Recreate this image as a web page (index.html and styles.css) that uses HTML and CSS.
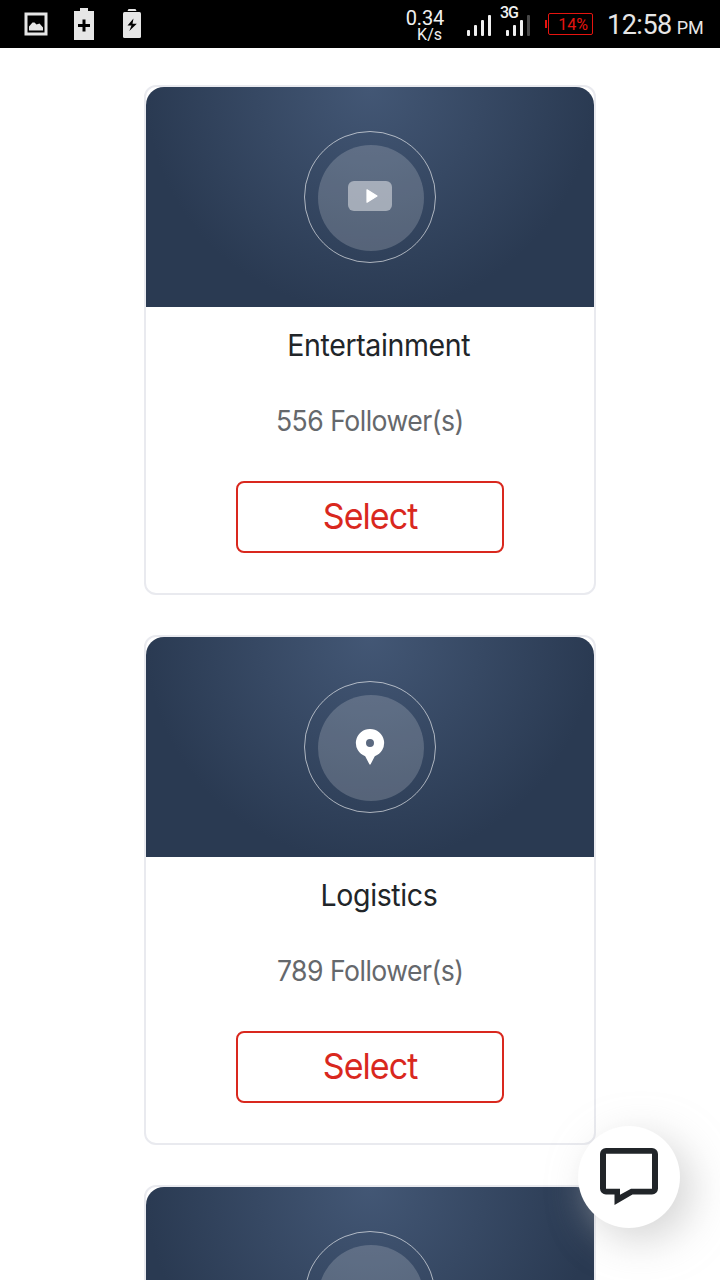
FILE: index.html
```
<!DOCTYPE html>
<html lang="en">
<head>
    <meta charset="UTF-8">
    <meta name="viewport" content="width=device-width, initial-scale=1.0">
    <title>Select Categories</title>
    <link rel="stylesheet" href="styles.css">
</head>
<body>
    <header class="status-bar">
        <svg class="status-icons" width="160" height="48" viewBox="0 0 160 48">
            <g fill="#e6e6e6">
                <path fill-rule="evenodd" d="M24.500 12.500h23v23h-23zM27.500 15.500v17h17v-17z"/>
                <path d="M29 30.500v-4l3.500-4h2l2 2 3-1 3.500 4v3z"/>
                <path d="M80 8h8v3h6v29H74V11h6z"/>
                <path d="M128.500 9h7l1 2h-9z"/>
                <rect x="123" y="12" width="18" height="26" rx="1.500"/>
            </g>
            <path d="M82.500 19.500h3V24H90v3h-4.500v4.500h-3V27H78v-3h4.500z"/>
            <path d="M133.500 18.500l-6 7h4l-2.200 5.500 7.500-7.200h-4.300z"/>
        </svg>
        <div class="net-speed">
            <span class="speed-value">0.34</span>
            <span class="speed-unit">K/s</span>
        </div>
        <svg class="signal" width="26" height="48" viewBox="0 0 26 48" fill="#f0f0f0">
            <rect x="0" y="30" width="3" height="6" rx="1"/>
            <rect x="7" y="25" width="3" height="11" rx="1"/>
            <rect x="14" y="20" width="3" height="16" rx="1"/>
            <rect x="21" y="15" width="3" height="21" rx="1"/>
        </svg>
        <div class="mobile-signal">
            <span class="net-type">3G</span>
            <svg width="26" height="48" viewBox="0 0 26 48" fill="#f0f0f0">
                <rect x="0" y="30" width="3" height="6" rx="1"/>
                <rect x="7" y="25" width="3" height="11" rx="1"/>
                <rect x="14" y="20" width="3" height="16" rx="1"/>
                <rect x="21" y="15" width="3" height="21" rx="1" fill="#484848"/>
            </svg>
        </div>
        <div class="battery"><span>14%</span></div>
        <div class="clock">12:58<span class="meridiem">PM</span></div>
    </header>

    <main class="card-list">
        <div class="card">
            <div class="card-banner">
                <div class="ring">
                    <div class="disc">
                        <svg width="44" height="40" viewBox="0 0 44 40">
                            <rect x="0" y="3" width="44" height="30" rx="6" fill="#fff" fill-opacity=".45"/>
                            <path d="M19 11.800v12.400l10-6.200z" fill="#fff" stroke="#fff" stroke-width="1.200" stroke-linejoin="round"/>
                        </svg>
                    </div>
                </div>
            </div>
            <h2 class="card-title">Entertainment</h2>
            <p class="followers">556 Follower(s)</p>
            <button class="select-btn"><span>Select</span></button>
        </div>

        <div class="card">
            <div class="card-banner">
                <div class="ring">
                    <div class="disc">
                        <svg width="44" height="40" viewBox="0 0 44 40">
                            <path fill="#fff" fill-rule="evenodd" d="M22 1a14 14 0 0 1 4.800 27.200L22.500 36.500h-1L17.200 28.200A14 14 0 0 1 22 1zM22 11a4 4 0 1 0 0 8 4 4 0 0 0 0-8z"/>
                        </svg>
                    </div>
                </div>
            </div>
            <h2 class="card-title">Logistics</h2>
            <p class="followers">789 Follower(s)</p>
            <button class="select-btn"><span>Select</span></button>
        </div>

        <div class="card">
            <div class="card-banner">
                <div class="ring">
                    <div class="disc"></div>
                </div>
            </div>
        </div>
    </main>

    <button class="chat-btn" aria-label="Open chat">
        <svg width="60" height="60" viewBox="0 0 60 60">
            <path fill="#212529" fill-rule="evenodd" d="M7 2h46a6 6 0 0 1 6 6v34.500a6 6 0 0 1-6 6H33.500L15.500 59V48.500H7a6 6 0 0 1-6-6V8a6 6 0 0 1 6-6zM7 7.800v35H21v6L32 42.800h21v-35z"/>
        </svg>
    </button>
</body>
</html>
```
FILE: styles.css
```
* {
    box-sizing: border-box;
}
body {
    margin: 0;
    height: 1280px;
    overflow: hidden;
    background-color: #fff;
    color: #212529;
    font-family: Inter, sans-serif;
}

/* status bar */
.status-bar {
    display: flex;
    height: 48px;
    background-color: #000;
    color: #f0f0f0;
    font-family: Roboto, sans-serif;
}
.net-speed {
    display: flex;
    flex-direction: column;
    align-items: flex-end;
    width: 64px;
    margin-left: 220px;
    padding-top: 9px;
    white-space: nowrap;
}
.speed-value {
    font-size: 20px;
    line-height: 18px;
    letter-spacing: -0.2px;
}
.speed-unit {
    margin-right: 2px;
    font-size: 16px;
    line-height: 16px;
}
.signal {
    margin-left: 23px;
}
.mobile-signal {
    position: relative;
    width: 26px;
    margin-left: 13px;
}
.net-type {
    position: absolute;
    top: 6px;
    left: -6px;
    font-size: 16px;
    font-weight: 500;
    line-height: 14px;
    letter-spacing: -1.2px;
}
.battery {
    display: flex;
    align-items: center;
    margin: 12px 0 0 13px;
    height: 24px;
    color: #e6140f;
    font-size: 16px;
}
.battery::before {
    content: "";
    width: 2px;
    height: 8px;
    margin-right: 1px;
    background-color: #e6140f;
}
.battery span {
    width: 45px;
    height: 22px;
    padding-right: 4px;
    border: 1px solid #e6140f;
    border-radius: 2px;
    line-height: 22px;
    text-align: right;
}
.clock {
    margin-left: 14px;
    color: #e6e6e6;
    font-size: 27px;
    line-height: 50px;
    letter-spacing: -0.5px;
    white-space: nowrap;
}
.meridiem {
    margin-left: 5px;
    font-size: 18px;
    letter-spacing: -0.2px;
}

/* cards */
.card-list {
    display: flex;
    flex-direction: column;
    align-items: center;
    gap: 40px;
    height: 1232px;
    padding: 37px 0 0 20px;
    overflow: hidden;
}
.card {
    display: flex;
    flex-direction: column;
    align-items: center;
    flex-shrink: 0;
    width: 452px;
    height: 510px;
    border: 2px solid #e9eaef;
    border-radius: 12px;
}
.card-banner {
    display: flex;
    justify-content: center;
    width: 448px;
    height: 220px;
    padding-top: 44px;
    border-radius: 18px 18px 0 0;
    background: radial-gradient(circle 225px at 50% 0, #435775 0%, #2a3a52 100%);
}
.ring {
    width: 132px;
    height: 132px;
    padding: 13px 0 0 13px;
    border: 1px solid rgba(255, 255, 255, 0.6);
    border-radius: 50%;
}
.disc {
    display: flex;
    justify-content: center;
    width: 106px;
    height: 106px;
    padding: 33px 2px 0 0;
    border-radius: 50%;
    background-color: rgba(255, 255, 255, 0.18);
}
.card-title {
    margin: 20px 0 0;
    padding-left: 19px;
    font-size: 30px;
    font-weight: 400;
    line-height: 36px;
    letter-spacing: -0.4px;
    transform: scaleX(0.95);
}
.followers {
    margin: 41px 0 0;
    color: #65686c;
    font-size: 28px;
    line-height: 34px;
    letter-spacing: -0.55px;
    transform: scaleX(0.95);
}
.select-btn {
    width: 268px;
    height: 72px;
    margin-top: 43px;
    padding: 0 0 2px;
    border: 2px solid #d9281e;
    border-radius: 8px;
    background-color: #fff;
    color: #d9281e;
    font-family: inherit;
    font-size: 36px;
    letter-spacing: -1px;
}
.select-btn span {
    display: inline-block;
    transform: scaleX(0.945);
}

/* floating chat button */
.chat-btn {
    position: fixed;
    top: 1126px;
    left: 578px;
    display: flex;
    width: 102px;
    height: 102px;
    padding: 20px 0 0 21px;
    border: none;
    border-radius: 50%;
    background-color: #fff;
    box-shadow: 12px 12px 40px rgba(190, 190, 190, 0.65);
}
```
